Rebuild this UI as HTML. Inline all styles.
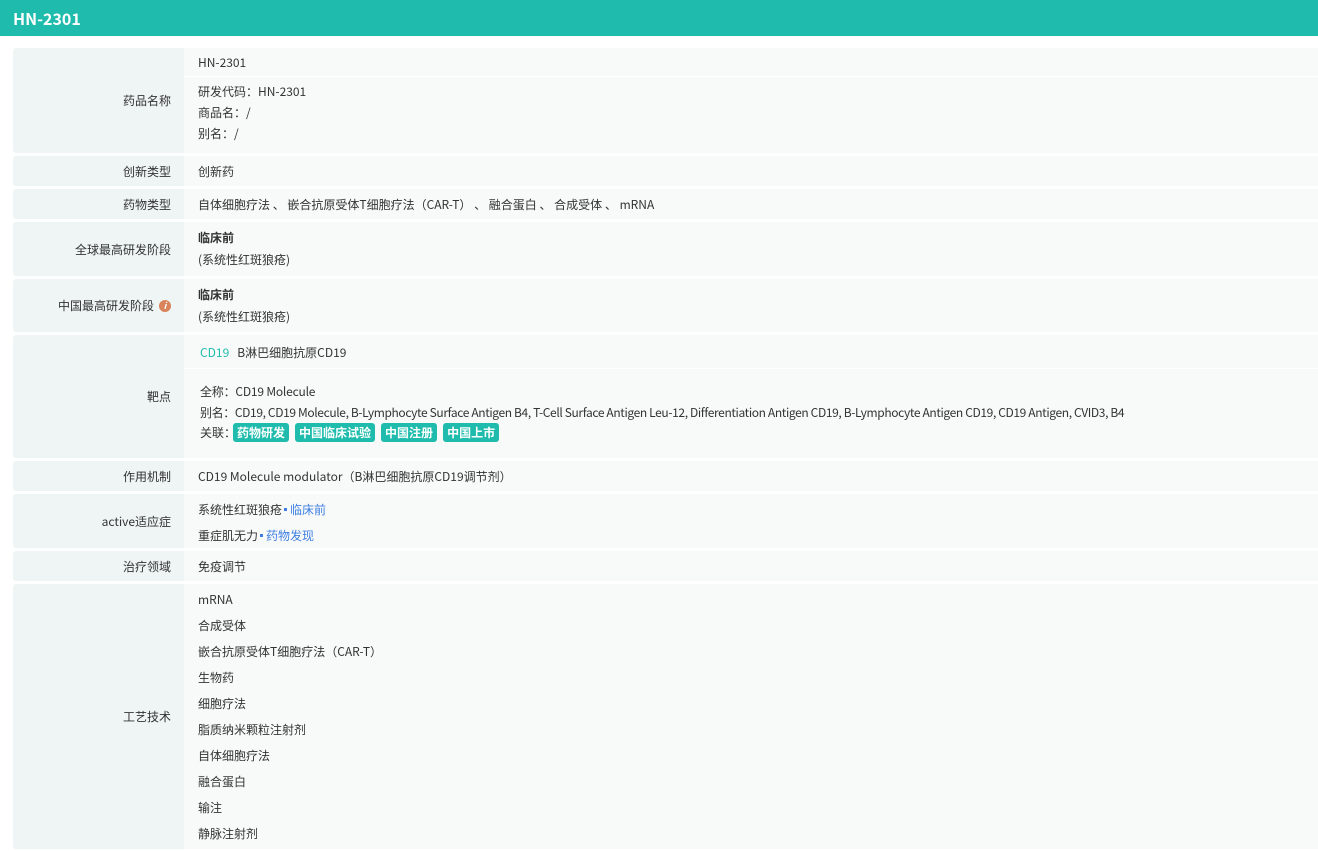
<!DOCTYPE html>
<html><head><meta charset="utf-8"><style>
body{margin:0;width:1318px;height:851px;background:#fff;font-family:"Noto Sans CJK SC","Liberation Sans",sans-serif;font-size:12px;line-height:17px;color:#333;overflow:hidden;position:relative}
.hd{position:absolute;left:0;top:0;width:1318px;height:36px;background:#1fbcad;color:#fff;font-weight:bold;font-size:16px;line-height:36px;padding-left:13px;box-sizing:border-box}
.r{position:absolute;left:13px;width:1305px}
.l{position:absolute;left:0;top:0;bottom:0;width:171px;background:#eef5f4;border-radius:3px 0 0 3px;display:flex;align-items:center;justify-content:flex-end;padding-right:13px;box-sizing:border-box}
.c{position:absolute;left:171px;top:0;bottom:0;right:0;background:#f8fafa}
.t{position:absolute;left:14px;white-space:nowrap}
.b{font-weight:bold}
.tag{display:inline-block;background:#1fbcad;color:#fff;font-weight:bold;border-radius:3px;padding:0 4px;line-height:19px;margin-right:6px}
.lk{color:#3e7fe0}
.dot{display:inline-block;width:3px;height:3px;background:#3e7fe0;vertical-align:middle;margin:0 3px 2px 2px}
.sep{position:absolute;left:0;right:0;height:1px;background:#fff}
</style></head><body>
<div class="hd">HN-2301</div>

<div class="r" style="top:48px;height:105px"><div class="l">药品名称</div><div class="c">
<div class="t" style="top:6px">HN-2301</div><div class="sep" style="top:28px"></div>
<div class="t" style="top:35px">研发代码：HN-2301</div>
<div class="t" style="top:56px">商品名：/</div>
<div class="t" style="top:77px">别名：/</div></div></div>

<div class="r" style="top:156px;height:30px"><div class="l">创新类型</div><div class="c"><div class="t" style="top:7px">创新药</div></div></div>
<div class="r" style="top:189px;height:30px"><div class="l">药物类型</div><div class="c"><div class="t" style="top:7px">自体细胞疗法 、 嵌合抗原受体T细胞疗法（CAR-T） 、 融合蛋白 、 合成受体 、 mRNA</div></div></div>
<div class="r" style="top:222px;height:54px"><div class="l">全球最高研发阶段</div><div class="c"><div class="t b" style="top:7px">临床前</div><div class="t" style="top:29px">(系统性红斑狼疮)</div></div></div>
<div class="r" style="top:279px;height:53px"><div class="l">中国最高研发阶段 <span style="display:inline-block;width:12px;height:12px;border-radius:50%;background:#d9835a;color:#fff;font-size:9px;line-height:12px;text-align:center;font-style:italic;font-weight:bold;margin-left:5px">i</span></div><div class="c"><div class="t b" style="top:7px">临床前</div><div class="t" style="top:29px">(系统性红斑狼疮)</div></div></div>

<div class="r" style="top:335px;height:123px"><div class="l">靶点</div><div class="c">
<div class="t" style="top:9px;left:16px"><span style="color:#1fbcad">CD19</span>&nbsp;&nbsp; B淋巴细胞抗原CD19</div><div class="sep" style="top:33px"></div>
<div class="t" style="top:48px;left:16px;letter-spacing:-0.2px">全称：CD19 Molecule</div>
<div class="t" style="top:69px;left:16px;letter-spacing:-0.37px">别名：CD19, CD19 Molecule, B-Lymphocyte Surface Antigen B4, T-Cell Surface Antigen Leu-12, Differentiation Antigen CD19, B-Lymphocyte Antigen CD19, CD19 Antigen, CVID3, B4</div>
<div class="t" style="top:88px;left:16px"><span style="margin-right:-3px">关联：</span><span class="tag">药物研发</span><span class="tag">中国临床试验</span><span class="tag">中国注册</span><span class="tag">中国上市</span></div></div></div>

<div class="r" style="top:461px;height:30px"><div class="l">作用机制</div><div class="c"><div class="t" style="top:7px">CD19 Molecule modulator（B淋巴细胞抗原CD19调节剂）</div></div></div>
<div class="r" style="top:494px;height:54px"><div class="l">active适应症</div><div class="c"><div class="t" style="top:7px">系统性红斑狼疮<span class="dot"></span><span class="lk">临床前</span></div><div class="t" style="top:33px">重症肌无力<span class="dot"></span><span class="lk">药物发现</span></div></div></div>
<div class="r" style="top:551px;height:30px"><div class="l">治疗领域</div><div class="c"><div class="t" style="top:7px">免疫调节</div></div></div>
<div class="r" style="top:584px;height:265px"><div class="l">工艺技术</div><div class="c">
<div class="t" style="top:7px">mRNA</div><div class="t" style="top:33px">合成受体</div><div class="t" style="top:59px">嵌合抗原受体T细胞疗法（CAR-T）</div><div class="t" style="top:85px">生物药</div><div class="t" style="top:111px">细胞疗法</div><div class="t" style="top:137px">脂质纳米颗粒注射剂</div><div class="t" style="top:163px">自体细胞疗法</div><div class="t" style="top:189px">融合蛋白</div><div class="t" style="top:215px">输注</div><div class="t" style="top:241px">静脉注射剂</div></div></div>
</body></html>
